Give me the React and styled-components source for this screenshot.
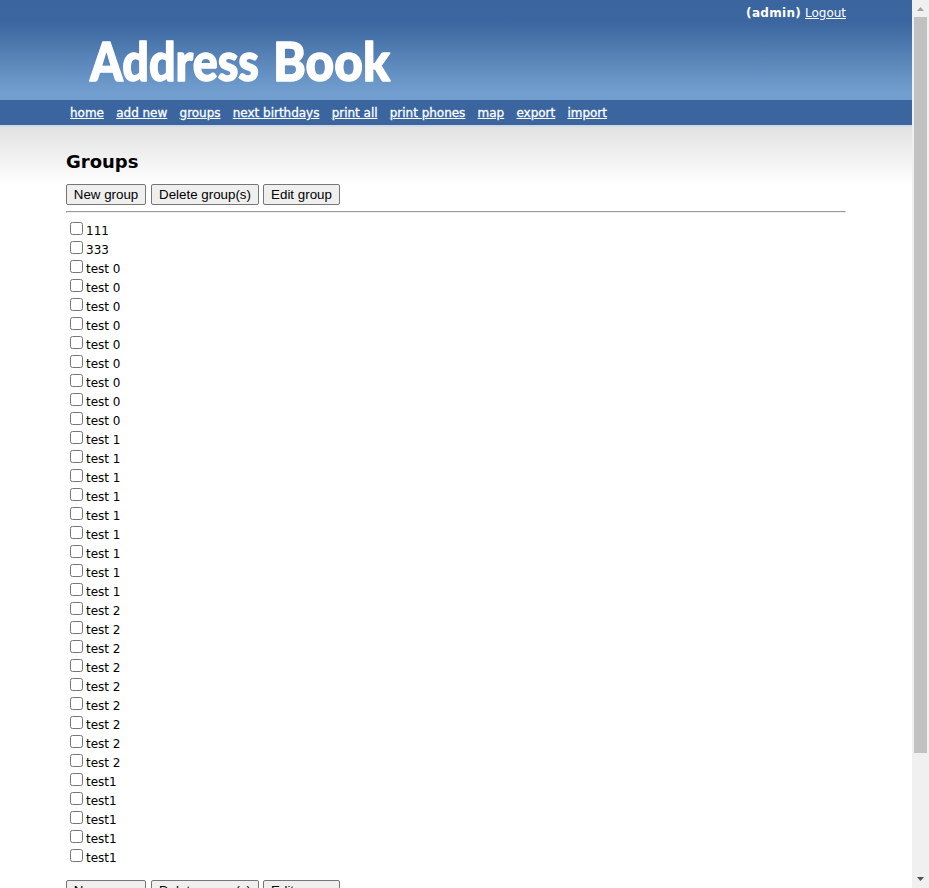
import React from 'react';
import styled, { createGlobalStyle } from 'styled-components';

const GlobalStyle = createGlobalStyle`
  * { box-sizing: border-box; }
  html, body { margin: 0; height: 100%; overflow: hidden; background: #fff; }
  body { font: 12px Verdana, "DejaVu Sans", sans-serif; color: #000; }
`;

const Window = styled.div`
  display: flex;
  width: 929px;
  height: 888px;
  overflow: hidden;
`;

const Page = styled.div`
  width: 912px;
  height: 888px;
  flex: none;
  overflow: hidden;
`;

const Header = styled.header`
  height: 100px;
  background: linear-gradient(#3a659e 0, #3b669f 22px, #729fcf 92px, #729fcf 100px);
  color: #fff;
`;

const Account = styled.div`
  height: 25px;
  padding: 1px 66px 0 0;
  display: flex;
  justify-content: flex-end;
  gap: 4px;
  line-height: 25px;
`;

const Admin = styled.b`
  letter-spacing: 0.3px;
`;

const Link = styled.a`
  color: #fff;
  text-decoration: underline;
  white-space: nowrap;
  letter-spacing: -0.02px;
  -webkit-text-stroke: ${({ $strong }) => ($strong ? '0.3px #fff' : '0')};
`;

const Logo = styled.svg`
  display: block;
  margin-left: 80px;
  font-family: Lato, sans-serif;
  font-weight: 900;
  font-size: 53px;
  fill: #fff;
  stroke: #fff;
  stroke-width: 1.4px;
  stroke-linejoin: round;
`;

const Nav = styled.nav`
  height: 25px;
  padding: 1px 0 0 70px;
  display: flex;
  gap: 12.25px;
  line-height: 25px;
  background: #3a659f;
`;

const Content = styled.main`
  height: 763px;
  padding: 24px 66px 0;
  border-top: 2px solid #d0d9e5;
  background: linear-gradient(#e2e2e2, #fff 58px);
`;

const Title = styled.h1`
  margin: 0;
  height: 33px;
  font-size: 18px;
  line-height: 21px;
`;

const Actions = styled.div`
  display: flex;
  gap: 5px;
`;

const Button = styled.button`
  width: ${({ $width }) => $width}px;
  height: 21px;
  padding: 0;
  border: 1px solid #767676;
  border-radius: 2px;
  background: #efefef;
  color: #000;
  font: 13.333px/18px "Liberation Sans", Arial, sans-serif;
  white-space: nowrap;
  &:last-child { margin-left: -1px; }
`;

const Rule = styled.hr`
  margin: 6px 0;
  height: 2px;
  border: 1px solid;
  border-color: #9a9a9a #eee #eee #9a9a9a;
`;

const Groups = styled.div`
  height: 661px;
`;

const Row = styled.label`
  display: flex;
  height: 19px;
  padding-left: 4px;
  line-height: 24px;
`;

const Check = styled.input`
  width: 13px;
  height: 13px;
  margin: 3px 3px 0 0;
`;

const Scrollbar = styled.aside`
  width: 17px;
  height: 888px;
  display: flex;
  flex-direction: column;
  align-items: center;
  background: #f0f0f0;
`;

const Arrow = styled.svg`
  width: 17px;
  height: 17px;
  flex: none;
`;

const Thumb = styled.div`
  width: 13px;
  height: 736px;
  background: #c1c1c1;
  margin-bottom: auto;
`;

const links = ['home', 'add new', 'groups', 'next birthdays', 'print all', 'print phones', 'map', 'export', 'import'];

const groups = [
  '111', '333',
  ...Array(9).fill('test 0'),
  ...Array(9).fill('test 1'),
  ...Array(9).fill('test 2'),
  ...Array(5).fill('test1'),
];

function GroupActions() {
  return (
    <Actions>
      <Button $width={80}>New group</Button>
      <Button $width={108}>Delete group(s)</Button>
      <Button $width={77}>Edit group</Button>
    </Actions>
  );
}

export default function App() {
  return (
    <>
      <GlobalStyle />
      <Window>
        <Page>
          <Header>
            <Account><Admin>(admin)</Admin><Link>Logout</Link></Account>
            <Logo width="330" height="75" role="img" aria-label="Address Book">
              <text x="10" y="56" textLength="169" lengthAdjust="spacingAndGlyphs">Address</text>
              <text x="193" y="56" textLength="117" lengthAdjust="spacingAndGlyphs">Book</text>
            </Logo>
          </Header>
          <Nav>{links.map((name) => <Link $strong key={name}>{name}</Link>)}</Nav>
          <Content>
            <Title>Groups</Title>
            <GroupActions />
            <Rule />
            <Groups>
              {groups.map((name, i) => <Row key={i}><Check type="checkbox" />{name}</Row>)}
            </Groups>
            <GroupActions />
          </Content>
        </Page>
        <Scrollbar>
          <Arrow><path d="M5 11h7L8.5 7z" fill="#a3a3a3" /></Arrow>
          <Thumb />
          <Arrow><path d="M5 6h7L8.5 10z" fill="#505050" /></Arrow>
        </Scrollbar>
      </Window>
    </>
  );
}
